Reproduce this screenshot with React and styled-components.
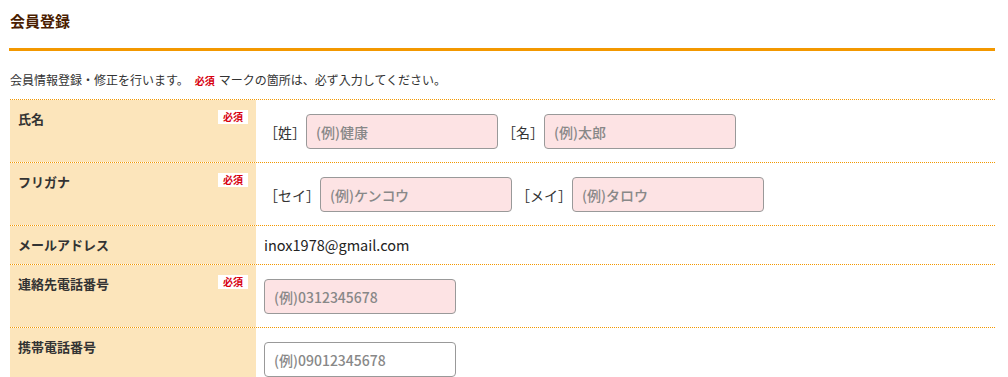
import React from 'react';
import styled, { createGlobalStyle } from 'styled-components';

const GlobalStyle = createGlobalStyle`
  body {
    margin: 0;
    background: #fff;
    font-family: "Noto Sans CJK JP", "Noto Sans", sans-serif;
    color: #333;
  }
`;

const Page = styled.div`
  width: 986px;
  padding-left: 9px;
`;

const Title = styled.h2`
  margin: 0;
  padding: 11px 0 0 1px;
  height: 37px;
  font-size: 15px;
  line-height: 20px;
  font-weight: 700;
  color: #4a1d00;
  border-bottom: 3px solid #f39800;
`;

const Lead = styled.p`
  margin: 20px 0 9px 1px;
  font-size: 12px;
  line-height: 18px;
  color: #333;
`;

const LeadMark = styled.span`
  margin: 0 4px 0 6px;
  font-size: 10px;
  font-weight: 700;
  color: #d7000f;
`;

const Table = styled.div`
  margin-left: 1px;
`;

const Row = styled.div`
  display: grid;
  grid-template-columns: 246px 1fr;
  border-top: 1px dotted #f39800;
`;

const Label = styled.div`
  display: flex;
  justify-content: space-between;
  align-items: flex-start;
  padding: 9px 8px;
  background: #fce5bb;
  font-size: 13px;
  line-height: 20px;
  font-weight: 700;
  color: #333;
`;

const Required = styled.span`
  display: inline-flex;
  align-items: center;
  justify-content: center;
  width: 30px;
  height: 14px;
  margin-top: 1px;
  background: #fff;
  color: #d7000f;
  font-size: 10px;
  font-weight: 700;
  line-height: 1;
`;

const Value = styled.div`
  display: flex;
  align-items: center;
  padding: ${(p) => (p.text ? '9px 8px' : '14px 8px 13px')};
  font-size: 14.5px;
  line-height: 20px;
  color: #222;
`;

const Field = styled.label`
  display: flex;
  align-items: center;
  margin-right: 4px;
`;

const Caption = styled.span`
  font-size: 14px;
  line-height: 20px;
  color: #333;
`;

const Input = styled.input`
  box-sizing: border-box;
  width: 192px;
  height: 35px;
  padding: 0 9px;
  border: 1px solid #999;
  border-radius: 4px;
  background: ${(p) => (p.required ? '#fde3e4' : '#fff')};
  font-family: "Noto Sans CJK JP", "Noto Sans", sans-serif;
  font-size: 14px;
  color: #333;
  outline: none;

  &::placeholder {
    color: #888;
    font-weight: 500;
  }
`;

const rows = [
  {
    label: '氏名',
    required: true,
    fields: [
      { caption: '［姓］', placeholder: '(例)健康' },
      { caption: '［名］', placeholder: '(例)太郎' },
    ],
  },
  {
    label: 'フリガナ',
    required: true,
    fields: [
      { caption: '［セイ］', placeholder: '(例)ケンコウ' },
      { caption: '［メイ］', placeholder: '(例)タロウ' },
    ],
  },
  { label: 'メールアドレス', text: 'inox1978@gmail.com' },
  {
    label: '連絡先電話番号',
    required: true,
    fields: [{ placeholder: '(例)0312345678' }],
  },
  {
    label: '携帯電話番号',
    fields: [{ placeholder: '(例)09012345678' }],
  },
];

const App = () => (
  <Page>
    <GlobalStyle />
    <Title>会員登録</Title>
    <Lead>
      会員情報登録・修正を行います。
      <LeadMark>必須</LeadMark>
      マークの箇所は、必ず入力してください。
    </Lead>
    <Table>
      {rows.map((row) => (
        <Row key={row.label}>
          <Label>
            <span>{row.label}</span>
            {row.required && <Required>必須</Required>}
          </Label>
          {row.text ? (
            <Value text>{row.text}</Value>
          ) : (
            <Value>
              {row.fields.map((f) => (
                <Field key={f.placeholder}>
                  {f.caption && <Caption>{f.caption}</Caption>}
                  <Input type="text" placeholder={f.placeholder} required={row.required} />
                </Field>
              ))}
            </Value>
          )}
        </Row>
      ))}
    </Table>
  </Page>
);

export default App;
